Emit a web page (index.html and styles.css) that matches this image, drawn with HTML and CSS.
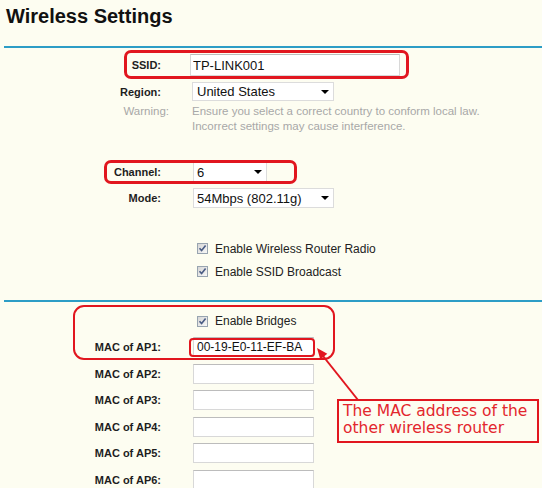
FILE: index.html
```html
<!DOCTYPE html>
<html lang="en">
<head>
<meta charset="UTF-8">
<meta name="viewport" content="width=device-width, initial-scale=1.0">
<title>Wireless Settings</title>
<link rel="stylesheet" href="styles.css">
</head>
<body>

<div class="page">
    <h1>Wireless Settings</h1>

    <div class="section basic">
        <div class="row row-ssid">
            <label for="ssid">SSID:</label>
            <input type="text" id="ssid" class="text ssid" value="TP-LINK001">
        </div>
        <div class="row row-region">
            <label>Region:</label>
            <div class="select region"><span>United States</span><i class="caret"></i></div>
        </div>
        <div class="row row-warning">
            <label class="muted">Warning:</label>
            <p class="note">Ensure you select a correct country to conform local law.<br>Incorrect settings may cause interference.</p>
        </div>
        <div class="row row-channel">
            <label>Channel:</label>
            <div class="select channel"><span>6</span><i class="caret"></i></div>
        </div>
        <div class="row row-mode">
            <label>Mode:</label>
            <div class="select mode"><span>54Mbps (802.11g)</span><i class="caret"></i></div>
        </div>
        <div class="row row-check first">
            <span></span>
            <div class="option"><span class="check"><svg width="9" height="9" viewBox="0 0 9 9"><path d="M1.5 4.2 L3.6 6.6 L7.6 1.6" fill="none" stroke="#4a5c84" stroke-width="1.6"/></svg></span>Enable Wireless Router Radio</div>
        </div>
        <div class="row row-check">
            <span></span>
            <div class="option"><span class="check"><svg width="9" height="9" viewBox="0 0 9 9"><path d="M1.5 4.2 L3.6 6.6 L7.6 1.6" fill="none" stroke="#4a5c84" stroke-width="1.6"/></svg></span>Enable SSID Broadcast</div>
        </div>

        <span class="mark mark-ssid"></span>
        <span class="mark mark-channel"></span>
    </div>

    <div class="section bridges">
        <div class="row row-bridge">
            <span></span>
            <div class="option"><span class="check"><svg width="9" height="9" viewBox="0 0 9 9"><path d="M1.5 4.2 L3.6 6.6 L7.6 1.6" fill="none" stroke="#4a5c84" stroke-width="1.6"/></svg></span>Enable Bridges</div>
        </div>
        <div class="row row-mac">
            <label>MAC of AP1:</label>
            <input type="text" class="text mac" value="00-19-E0-11-EF-BA">
        </div>
        <div class="row row-mac">
            <label>MAC of AP2:</label>
            <input type="text" class="text mac" value="">
        </div>
        <div class="row row-mac">
            <label>MAC of AP3:</label>
            <input type="text" class="text mac" value="">
        </div>
        <div class="row row-mac">
            <label>MAC of AP4:</label>
            <input type="text" class="text mac" value="">
        </div>
        <div class="row row-mac">
            <label>MAC of AP5:</label>
            <input type="text" class="text mac" value="">
        </div>
        <div class="row row-mac">
            <label>MAC of AP6:</label>
            <input type="text" class="text mac" value="">
        </div>

        <span class="mark mark-bridge"></span>
        <span class="mark mark-ap1"></span>
    </div>

    <!-- annotation callout -->
    <svg class="arrow" width="55" height="65" viewBox="0 0 55 65">
        <line x1="48" y1="60" x2="13" y2="16" stroke="#e1161f" stroke-width="2"/>
        <polygon points="7,8 10.3,19.4 17.3,13.8" fill="#e1161f"/>
    </svg>
    <div class="callout">The MAC address of the<br>other wireless router</div>
</div>

</body>
</html>
```

FILE: styles.css
```css
body {
    margin: 0;
    background: #fdfdf1;
    font-family: "Liberation Sans", Arial, sans-serif;
    color: #1e1e1e;
}
.page {
    position: relative;
    width: 542px;
    height: 488px;
    overflow: hidden;
}
h1 {
    margin: 5px 0 18px 6px;
    font-size: 20px;
    line-height: 23px;
    font-weight: bold;
    color: #111;
}
.section {
    position: relative;
    margin-left: 4px;
    border-top: 2px solid #2d9dc6;
}
.basic {
    padding: 3px 0 17px;
}
.bridges {
    padding-top: 6px;
}
.row {
    display: grid;
    grid-template-columns: 157px auto;
    column-gap: 31px;
    align-items: center;
}
.row label {
    text-align: right;
    font-size: 11px;
    font-weight: bold;
}
.row-ssid { height: 28px; }
.row-region { height: 25px; }
.row-warning {
    height: 30px;
    align-items: start;
}
.row-channel { height: 26px; margin-top: 25px; }
.row-mode { height: 26px; }
.row-check { height: 23px; }
.row-check.first { margin-top: 26px; }
.row-bridge { height: 26px; }
.row-mac { height: 26.5px; }

.row label.muted {
    margin-right: -8px;
    font-weight: normal;
    font-size: 11.5px;
    line-height: 15px;
    color: #a8a8a8;
}
.note {
    margin: 0;
    font-size: 11.5px;
    line-height: 15px;
    color: #a8a8a8;
}

.text {
    box-sizing: border-box;
    background: #fff;
    border: 1px solid #d8d8d8;
    border-top-color: #bcbcbc;
    font-family: "Liberation Sans", Arial, sans-serif;
    color: #111;
    outline: none;
}
.ssid {
    width: 210px;
    height: 22px;
    margin-left: -2px;
    padding: 0 2px;
    font-size: 13px;
}
.mac {
    width: 121px;
    height: 20px;
    margin-left: 1px;
    padding: 0 3px;
    font-size: 12px;
}

.select {
    box-sizing: border-box;
    display: flex;
    align-items: center;
    justify-content: space-between;
    height: 20px;
    padding: 0 4px 0 4px;
    background: #fff;
    border: 1px solid #dcdcdc;
    font-size: 13px;
    color: #111;
}
.region { width: 142px; height: 19px; }
.channel { width: 74px; margin-left: 1px; padding-left: 3px; }
.mode { width: 141px; margin-left: 1px; padding-left: 3px; }
.caret {
    width: 0;
    height: 0;
    border-left: 4px solid transparent;
    border-right: 4px solid transparent;
    border-top: 4px solid #000;
}

.option {
    display: flex;
    align-items: center;
    margin-left: 5px;
    font-size: 12px;
    color: #222;
}
.check {
    box-sizing: border-box;
    display: flex;
    align-items: center;
    justify-content: center;
    width: 11px;
    height: 11px;
    margin-right: 7px;
    border: 1px solid #98a4b0;
    background: linear-gradient(135deg, #d6d6d6, #f8f8f8);
}

.mark {
    position: absolute;
    box-sizing: border-box;
    border: 3px solid #e1161f;
    border-radius: 7px;
}
.mark-ssid { left: 120px; top: 2px; width: 285px; height: 29px; }
.mark-channel { left: 100px; top: 112px; width: 193px; height: 24px; }
.mark-bridge { left: 69px; top: 3px; width: 262px; height: 55px; border-radius: 11px; border-width: 2.5px; }
.mark-ap1 { left: 185px; top: 36px; width: 126px; height: 19px; border-width: 2px; border-radius: 4px; }

.arrow {
    position: absolute;
    left: 310px;
    top: 340px;
}
.callout {
    position: absolute;
    left: 337px;
    top: 399px;
    box-sizing: border-box;
    width: 202px;
    height: 44px;
    padding: 2px 0 0 4px;
    border: 2px solid #e1161f;
    background: #fdfdf1;
    font-family: "DejaVu Sans", Verdana, sans-serif;
    font-size: 15.5px;
    line-height: 17px;
    color: #e3262d;
    white-space: nowrap;
}
```
